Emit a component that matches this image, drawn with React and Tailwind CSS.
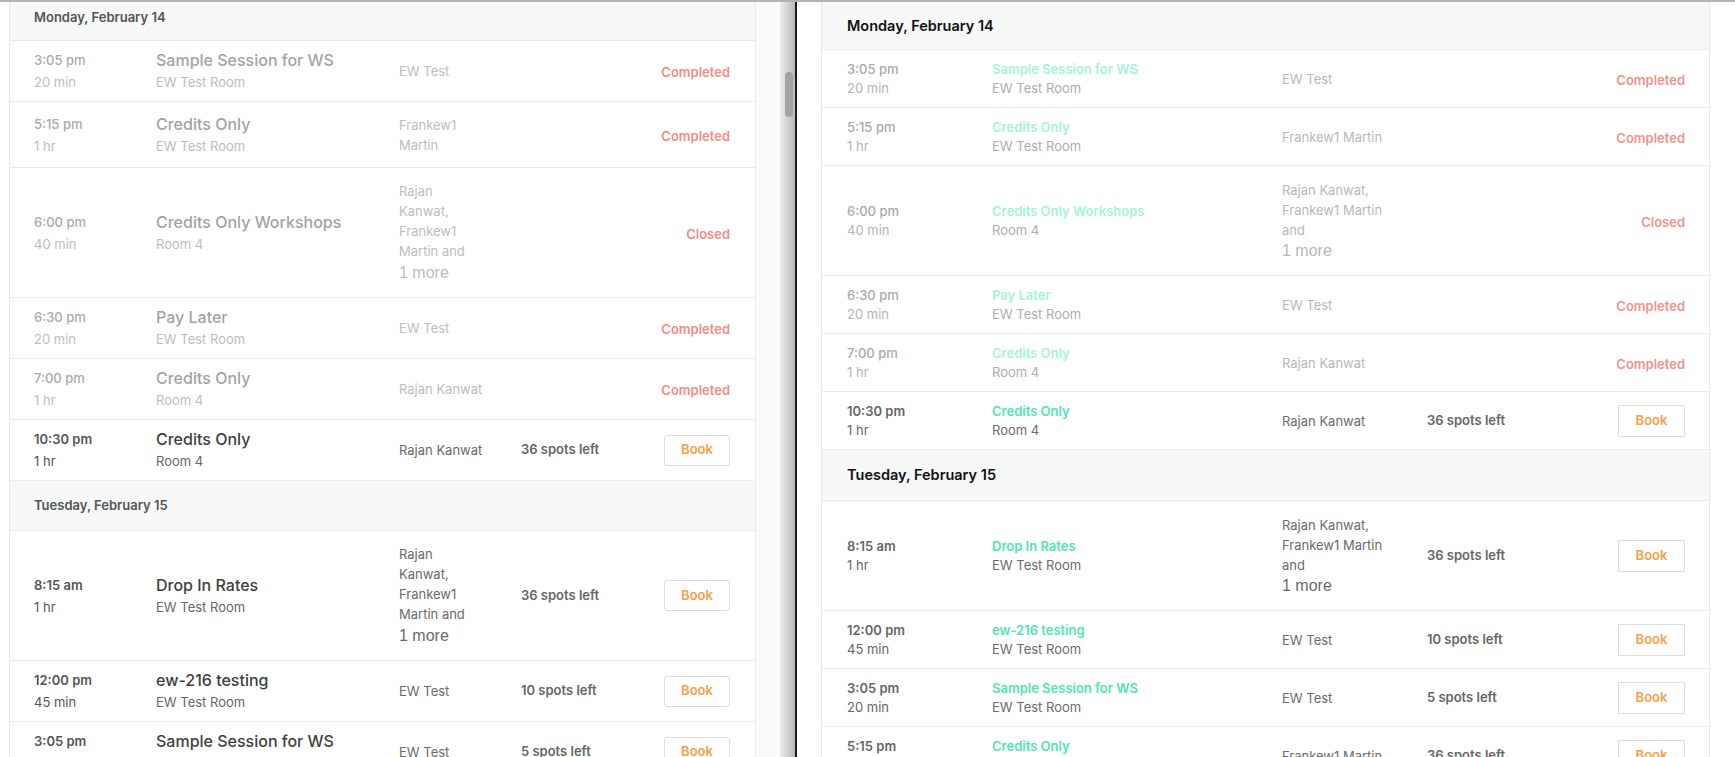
const monday = [
  { time: '3:05 pm', dur: '20 min', title: 'Sample Session for WS', room: 'EW Test Room', left: ['EW Test'], right: ['EW Test'], status: 'Completed' },
  { time: '5:15 pm', dur: '1 hr', title: 'Credits Only', room: 'EW Test Room', left: ['Frankew1', 'Martin'], right: ['Frankew1 Martin'], status: 'Completed' },
  { time: '6:00 pm', dur: '40 min', title: 'Credits Only Workshops', room: 'Room 4', left: ['Rajan', 'Kanwat,', 'Frankew1', 'Martin and'], right: ['Rajan Kanwat,', 'Frankew1 Martin', 'and'], more: true, status: 'Closed' },
  { time: '6:30 pm', dur: '20 min', title: 'Pay Later', room: 'EW Test Room', left: ['EW Test'], right: ['EW Test'], status: 'Completed' },
  { time: '7:00 pm', dur: '1 hr', title: 'Credits Only', room: 'Room 4', left: ['Rajan Kanwat'], right: ['Rajan Kanwat'], status: 'Completed' },
  { time: '10:30 pm', dur: '1 hr', title: 'Credits Only', room: 'Room 4', left: ['Rajan Kanwat'], right: ['Rajan Kanwat'], spots: '36 spots left' },
]

const tuesday = [
  { time: '8:15 am', dur: '1 hr', title: 'Drop In Rates', room: 'EW Test Room', left: ['Rajan', 'Kanwat,', 'Frankew1', 'Martin and'], right: ['Rajan Kanwat,', 'Frankew1 Martin', 'and'], more: true, spots: '36 spots left' },
  { time: '12:00 pm', dur: '45 min', title: 'ew-216 testing', room: 'EW Test Room', left: ['EW Test'], right: ['EW Test'], spots: '10 spots left' },
  { time: '3:05 pm', dur: '20 min', title: 'Sample Session for WS', room: 'EW Test Room', left: ['EW Test'], right: ['EW Test'], spots: '5 spots left' },
  { time: '5:15 pm', dur: '1 hr', title: 'Credits Only', room: 'EW Test Room', left: ['Frankew1 Martin'], right: ['Frankew1 Martin'], spots: '36 spots left', rightOnly: true },
]

const font = "font-['Inter','Lato',sans-serif]"

function LeftRow({ r }) {
  const past = !!r.status
  return (
    <div className="flex items-center min-h-[61px] border-b border-[#ececec]">
      <div className="w-[146px] pl-6 text-[13px] leading-[22px]">
        <div className={past ? 'font-medium text-[#a9a9a9]' : 'font-semibold text-[#555]'}>{r.time}</div>
        <div className={past ? 'text-[#bdbdbd]' : 'text-[#555]'}>{r.dur}</div>
      </div>
      <div className="w-[243px] leading-[22px]">
        <div className={`text-[16px] font-medium ${past ? 'text-[#a3a3a3]' : 'text-[#404040]'}`}>{r.title}</div>
        <div className={`text-[13px] ${past ? 'text-[#bdbdbd]' : 'text-[#666]'}`}>{r.room}</div>
      </div>
      <div className={`w-[122px] py-[12.5px] text-[13px] leading-[20px] whitespace-nowrap ${past ? 'text-[#bdbdbd]' : 'text-[#6a6a6a]'}`}>
        {r.left.map((l) => <div key={l}>{l}</div>)}
        {r.more && <div className="font-['Liberation_Sans',Arial,sans-serif] text-[16px] leading-[24px]">1 more</div>}
      </div>
      <div className="flex-1 text-[13px] font-semibold text-[#666]">{r.spots}</div>
      <div className="pr-[25px]">
        {past ? (
          <span className="text-[13px] font-semibold text-[#f68b85]">{r.status}</span>
        ) : (
          <button className="w-[66px] h-[31px] rounded-[3px] border border-[#dcdcdc] bg-white text-[13px] font-semibold text-[#f6a049]">Book</button>
        )}
      </div>
    </div>
  )
}

function RightRow({ r }) {
  const past = !!r.status
  return (
    <div className="flex items-center min-h-[58px] border-b border-[#ececec]">
      <div className="w-[170px] pl-[25px] text-[13px] leading-[19px]">
        <div className={past ? 'font-medium text-[#a9a9a9]' : 'font-semibold text-[#666]'}>{r.time}</div>
        <div className={past ? 'text-[#b5b5b5]' : 'text-[#666]'}>{r.dur}</div>
      </div>
      <div className="w-[290px] text-[13px] leading-[19px]">
        <div className={`font-semibold ${past ? 'text-[#a6f3da]' : 'text-[#4ee6b4]'}`}>{r.title}</div>
        <div className={past ? 'text-[#adadad]' : 'text-[#6b6b6b]'}>{r.room}</div>
      </div>
      <div className={`w-[145px] py-[13.5px] text-[13px] leading-[20px] whitespace-nowrap ${past ? 'text-[#b8b8b8]' : 'text-[#6b6b6b]'}`}>
        {r.right.map((l) => <div key={l}>{l}</div>)}
        {r.more && <div className="font-['Liberation_Sans',Arial,sans-serif] text-[16px] leading-[22px]">1 more</div>}
      </div>
      <div className="flex-1 text-[13px] font-semibold text-[#666]">{r.spots}</div>
      <div className="pr-[24px]">
        {past ? (
          <span className="text-[13px] font-semibold text-[#f4918c]">{r.status}</span>
        ) : (
          <button className="w-[67px] h-[32px] border border-[#dedede] bg-white text-[13px] font-semibold text-[#f6a049]">Book</button>
        )}
      </div>
    </div>
  )
}

export default function App() {
  return (
    <div className={`w-[1735px] h-[757px] overflow-hidden flex bg-white border-t-2 border-[#b3b3b3] ${font}`}>
      {/* left window */}
      <div className="flex shrink-0">
        <div className="w-[9px]" />
        <div className="w-[747px] border-x border-[#e9e9e9]">
          <div className="h-[39px] pt-[6px] pl-6 bg-[#f7f8f8] border-b border-[#ececec] text-[13px] leading-[18px] font-semibold text-[#555]">
            Monday, February 14
          </div>
          {monday.map((r, i) => <LeftRow key={i} r={r} />)}
          <div className="h-[50px] flex items-center pl-6 bg-[#f7f8f8] border-b border-[#ececec] text-[13px] font-semibold text-[#555]">
            Tuesday, February 15
          </div>
          {tuesday.filter((r) => !r.rightOnly).map((r, i) => <LeftRow key={i} r={r} />)}
        </div>
        <div className="w-[24px] bg-[#fafafa]" />
        <div className="w-[15px] bg-linear-to-r from-[#ededed] to-[#b9b9b9] pt-[70px] pl-[5px]">
          <div className="w-[8px] h-[45px] rounded-full bg-[#a3a3a3]" />
        </div>
        <div className="w-[2px] bg-[#1c1c1c]" />
      </div>

      {/* right window */}
      <div className="flex flex-1">
        <div className="w-[24px]" />
        <div className="w-[889px] border-x border-[#e9e9e9]">
          <div className="h-[48px] flex items-center pl-[25px] bg-[#f7f8f8] border-b border-[#ececec] text-[14.5px] font-semibold text-[#111]">
            Monday, February 14
          </div>
          {monday.map((r, i) => <RightRow key={i} r={r} />)}
          <div className="h-[51px] flex items-center pl-[25px] bg-[#f7f8f8] border-b border-[#ececec] text-[14.5px] font-semibold text-[#111]">
            Tuesday, February 15
          </div>
          {tuesday.map((r, i) => <RightRow key={i} r={r} />)}
        </div>
      </div>
    </div>
  )
}
